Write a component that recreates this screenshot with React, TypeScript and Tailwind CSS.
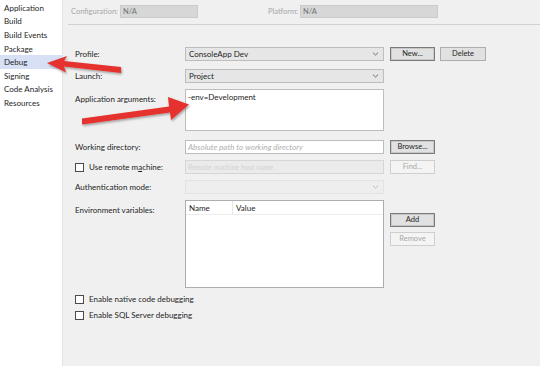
import React from "react";

const font = "font-['Lato','Noto_Sans',sans-serif]";

function Chevron({ faded = false }: { faded?: boolean }) {
  return (
    <svg width="7" height="5" viewBox="0 0 7 5" className="absolute right-[4px] top-1/2 -translate-y-1/2">
      <path d="M1 1.2 L3.5 3.6 L6 1.2" fill="none" stroke={faded ? "#b8b8b8" : "#606060"} strokeWidth="0.9" />
    </svg>
  );
}

function Btn({ label, strong = false, disabled = false, w = "w-[45px]" }: { label: string; strong?: boolean; disabled?: boolean; w?: string }) {
  return (
    <div
      className={`${w} h-[14px] flex items-center justify-center text-[7.5px] border ${
        disabled
          ? "bg-[#f4f4f4] border-[#cfcfcf] text-[#a8a8a8]"
          : strong
          ? "bg-[#e1e1e1] border-[#7a7a7a] text-[#1e1e1e] shadow-[inset_0_0_0_1px_#c8c8c8]"
          : "bg-[#e1e1e1] border-[#adadad] text-[#1e1e1e]"
      }`}
    >
      {label}
    </div>
  );
}

function Check({ children }: { children: React.ReactNode }) {
  return (
    <div className="flex items-center h-[14px]">
      <div className="w-[9px] h-[9px] bg-white border border-[#4a4a4a]" />
      <span className="ml-[5px]">{children}</span>
    </div>
  );
}

export default function App() {
  const items = ["Application", "Build", "Build Events", "Package", "Debug", "Signing", "Code Analysis", "Resources"];

  return (
    <div className={`relative w-[540px] h-[366px] overflow-hidden flex bg-[#f0f0f0] text-[#1e1e1e] ${font} text-[8px]`}>
      {/* sidebar */}
      <div className="w-[63px] h-full bg-white pt-[1px] border-r border-[#e4e4e4]">
        {items.map((it) => (
          <div
            key={it}
            className={`h-[13.6px] flex items-center pl-[4px] text-[8px] ${it === "Debug" ? "bg-[#d7e0f5]" : ""}`}
          >
            {it}
          </div>
        ))}
      </div>

      {/* main */}
      <div className="flex-1 flex flex-col">
        <div className="ml-[5px] h-[25px] border-b border-[#d2d2d2] flex items-start pt-[5px] pl-[3px] text-[7.5px] text-[#a6a6a6]">
          <span className="w-[49px] leading-[13px]">Configuration:</span>
          <div className="w-[78px] h-[13px] bg-[#d7d7d7] border border-[#cacaca] pl-[2px] leading-[11px] text-[#707070]">N/A</div>
          <span className="ml-[70px] w-[32px] leading-[13px]">Platform:</span>
          <div className="w-[138px] h-[13px] bg-[#d7d7d7] border border-[#cacaca] pl-[2px] leading-[11px] text-[#707070]">N/A</div>
        </div>

        <div className="pl-[12px] flex flex-col">
          {/* Profile */}
          <div className="flex items-center mt-[22px] h-[14px]">
            <span className="w-[110px]">Profile:</span>
            <div className="relative w-[199px] h-[14px] bg-[#e6e6e6] border border-[#bdbdbd] pl-[3px] leading-[12px]">
              ConsoleApp Dev
              <Chevron />
            </div>
            <div className="ml-[6px] flex gap-[5px]">
              <Btn label="New..." strong />
              <Btn label="Delete" w="w-[46px]" />
            </div>
          </div>

          {/* Launch */}
          <div className="flex items-center mt-[8px] h-[14px]">
            <span className="w-[110px]">Launch:</span>
            <div className="relative w-[199px] h-[14px] bg-[#e6e6e6] border border-[#bdbdbd] pl-[3px] leading-[12px]">
              Project
              <Chevron />
            </div>
          </div>

          {/* Application arguments */}
          <div className="flex items-start mt-[6px]">
            <span className="w-[110px] pt-[4px]">Application arguments:</span>
            <div className="w-[199px] h-[42px] bg-white border border-[#bdbdbd] pl-[2px] pt-[1px]">-env=Development</div>
          </div>

          {/* Working directory */}
          <div className="flex items-center mt-[9px] h-[14px]">
            <span className="w-[110px]">Working directory:</span>
            <div className="w-[199px] h-[14px] bg-white border border-[#bdbdbd] pl-[2px] leading-[12px] italic text-[#b0b0b0]">
              Absolute path to working directory
            </div>
            <div className="ml-[6px]">
              <Btn label="Browse..." strong />
            </div>
          </div>

          {/* Remote machine */}
          <div className="flex items-center mt-[6px] h-[14px]">
            <div className="w-[110px]">
              <Check>
                Use remote m<span className="underline">a</span>chine:
              </Check>
            </div>
            <div className="w-[199px] h-[14px] bg-[#ebebeb] border border-[#d6d6d6] pl-[2px] leading-[12px] text-[7px] text-[#d2d2d2]">
              Remote machine host name
            </div>
            <div className="ml-[6px]">
              <Btn label="Find..." disabled />
            </div>
          </div>

          {/* Authentication */}
          <div className="flex items-center mt-[6px] h-[14px]">
            <span className="w-[110px]">Authentication mode:</span>
            <div className="relative w-[199px] h-[14px] bg-[#eeeeee] border border-[#e2e2e2]">
              <Chevron faded />
            </div>
          </div>

          {/* Environment variables */}
          <div className="flex items-start mt-[6px]">
            <span className="w-[110px] pt-[4px]">Environment variables:</span>
            <div className="w-[199px] h-[88px] bg-white border border-[#adadad] flex flex-col">
              <div className="flex h-[14px] border-b border-[#ececec] items-center">
                <span className="w-[47px] pl-[3px] border-r border-[#e6e6e6] h-full flex items-center">Name</span>
                <span className="pl-[3px]">Value</span>
              </div>
            </div>
            <div className="ml-[6px] mt-[13px] flex flex-col gap-[5px]">
              <Btn label="Add" strong />
              <Btn label="Remove" disabled />
            </div>
          </div>

          {/* checkboxes */}
          <div className="mt-[4px]">
            <Check>Enable native code debugging</Check>
          </div>
          <div className="mt-[2px]">
            <Check>Enable SQL Server debugging</Check>
          </div>
        </div>
      </div>

      {/* annotation arrows */}
      <svg className="absolute inset-0 pointer-events-none" width="540" height="366" viewBox="0 0 540 366">
        <defs>
          <filter id="sh" x="-20%" y="-50%" width="140%" height="200%">
            <feDropShadow dx="1" dy="1.5" stdDeviation="1.2" floodColor="#000" floodOpacity="0.35" />
          </filter>
        </defs>
        <g filter="url(#sh)" fill="#e5322d">
          <polygon points="121,67 121,73 64,66.5 66,72.5 47,63 67,56 64,61" />
          <polygon points="82,118.5 82,124.5 170,112.5 171,120 189,104.5 168,97 169,106.5" />
        </g>
      </svg>
    </div>
  );
}
